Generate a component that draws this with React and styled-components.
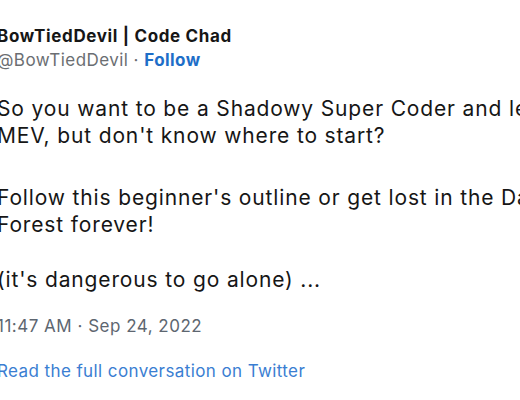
import React from "react";
import styled, { createGlobalStyle } from "styled-components";

const GlobalStyle = createGlobalStyle`
  html, body {
    margin: 0;
    padding: 0;
    background: #ffffff;
  }
  body {
    font-family: Inter, "Liberation Sans", Arial, sans-serif;
    color: #141414;
    -webkit-font-smoothing: antialiased;
  }
`;

const Tweet = styled.div`
  width: 580px;
  margin-left: -3px;
  padding-top: 24px;
  overflow: hidden;
`;

const Author = styled.div`
  display: flex;
  flex-direction: column;
`;

const Name = styled.div`
  font-size: 17px;
  font-weight: 700;
  line-height: 24px;
  letter-spacing: 0.65px;
  color: #161616;
`;

const Handle = styled.div`
  font-size: 17px;
  line-height: 24px;
  letter-spacing: 0.45px;
  color: #6b6e72;
`;

const FollowLink = styled.a`
  color: #1e6ec8;
  font-weight: 700;
  text-decoration: none;
`;

const Body = styled.div`
  margin-top: 24px;
`;

const Para = styled.p`
  margin: 0 0 ${(p) => p.$after || 0}px;
  font-size: 21px;
  line-height: 26.6px;
  letter-spacing: 0.85px;
  white-space: nowrap;
  color: #161616;
`;

const Meta = styled.div`
  margin-top: 20px;
  font-size: 17px;
  line-height: 24px;
  letter-spacing: 0.5px;
  color: #5d6670;
`;

const ReadMore = styled.a`
  display: block;
  margin-top: 21px;
  font-size: 17px;
  line-height: 24px;
  letter-spacing: 0.4px;
  color: #3a7ed2;
  text-decoration: none;
`;

export default function App() {
  return (
    <>
      <GlobalStyle />
      <Tweet>
        <Author>
          <Name>BowTiedDevil | Code Chad</Name>
          <Handle>
            @BowTiedDevil · <FollowLink href="#">Follow</FollowLink>
          </Handle>
        </Author>
        <Body>
          <Para>So you want to be a Shadowy Super Coder and learn</Para>
          <Para $after={36}>MEV, but don't know where to start?</Para>
          <Para>Follow this beginner's outline or get lost in the Dark</Para>
          <Para $after={29}>Forest forever!</Para>
          <Para>(it's dangerous to go alone) ...</Para>
        </Body>
        <Meta>11:47 AM · Sep 24, 2022</Meta>
        <ReadMore href="#">Read the full conversation on Twitter</ReadMore>
      </Tweet>
    </>
  );
}
